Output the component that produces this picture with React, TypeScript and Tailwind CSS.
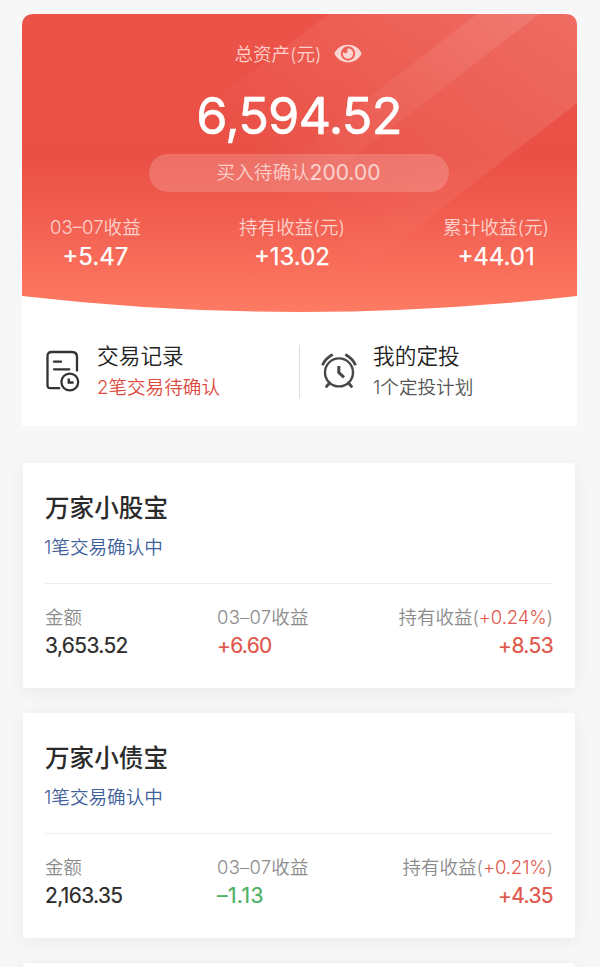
import React from 'react';

interface Fund {
  name: string;
  pending: string;
  amount: string;
  daily: string;
  rate: string;
  holding: string;
}

interface StatProps {
  label: string;
  value: string;
}

const funds: Fund[] = [
  { name: '万家小股宝', pending: '1笔交易确认中', amount: '3,653.52', daily: '+6.60', rate: '+0.24%', holding: '+8.53' },
  { name: '万家小债宝', pending: '1笔交易确认中', amount: '2,163.35', daily: '–1.13', rate: '+0.21%', holding: '+4.35' },
];

const EyeIcon: React.FC = () => (
  <svg width="28" height="19" viewBox="0 0 28 19" className="block">
    <path d="M0.3 9.5C3 4 8 0.7 14 0.7S25 4 27.7 9.5C25 15 20 18.3 14 18.3S3 15 0.3 9.5Z" fill="#fbd5d1" />
    <circle cx="14" cy="9.5" r="7.2" fill="#ec6157" />
    <path d="M14 4.3A5.2 5.2 0 1 1 8.8 9.5Q8.8 8.8 9 8.1Q10.2 9.6 12 9.1Q14.4 8.2 13.2 5.4Z" fill="#fbd5d1" />
  </svg>
);

const RecordIcon: React.FC = () => (
  <svg width="34" height="42" viewBox="0 0 34 42" fill="none" stroke="#333" strokeWidth="2.3" strokeLinecap="round" className="block">
    <path d="M13.2 38.2H4.2Q1.5 38.2 1.5 35.5V6Q1.5 2 5.5 2H26Q31 2 31 7V20.5" />
    <path d="M8 11.7H15M8 19.3H23.3" />
    <circle cx="23.8" cy="32" r="8.4" />
    <path d="M22.8 28.5V32.6H27.6" strokeWidth="2.5" strokeLinecap="butt" />
  </svg>
);

const AlarmIcon: React.FC = () => (
  <svg width="36" height="36" viewBox="0 0 36 36" fill="none" stroke="#484848" strokeWidth="2.4" strokeLinecap="round" className="block">
    <circle cx="18" cy="19.4" r="14" />
    <path d="M8.6 29.8L5.5 33.5M27.4 29.8L30.5 33.5" strokeWidth="2.8" />
    <path d="M1.5 12.2Q4.4 5.2 11.7 1.5M34.5 12.2Q31.6 5.2 24.3 1.5" strokeWidth="2.9" strokeLinecap="butt" />
    <path d="M17.8 13V19.5L23 24.3" strokeWidth="3" strokeLinecap="butt" />
  </svg>
);

const HeaderBackground: React.FC = () => (
  <svg width="555" height="299" viewBox="0 0 555 299" className="absolute left-0 top-0">
    <defs>
      <linearGradient id="base" x1="0" y1="0" x2="0" y2="1">
        <stop offset="0" stopColor="#ec5348" />
        <stop offset="0.48" stopColor="#ea5045" />
        <stop offset="0.64" stopColor="#f05b4e" />
        <stop offset="1" stopColor="#ff7b63" />
      </linearGradient>
      <linearGradient id="wide" gradientUnits="userSpaceOnUse" x1="540" y1="0" x2="310" y2="230">
        <stop offset="0" stopColor="#fff" stopOpacity="0.14" />
        <stop offset="1" stopColor="#fff" stopOpacity="0" />
      </linearGradient>
      <linearGradient id="narrow" gradientUnits="userSpaceOnUse" x1="500" y1="0" x2="260" y2="200">
        <stop offset="0" stopColor="#fff" stopOpacity="0.1" />
        <stop offset="1" stopColor="#fff" stopOpacity="0" />
      </linearGradient>
      <clipPath id="shape">
        <path d="M0 12Q0 0 12 0H543Q555 0 555 12V282Q277.5 314 0 282Z" />
      </clipPath>
    </defs>
    <g clipPath="url(#shape)">
      <rect width="555" height="299" fill="url(#base)" />
      <path d="M307 0H555V89L285 299H-90Z" fill="url(#wide)" />
      <path d="M455 0H517L131 299H69Z" fill="url(#narrow)" />
    </g>
  </svg>
);

const HeaderStat: React.FC<StatProps> = ({ label, value }) => (
  <div className="text-center">
    <div className="text-[18.6px] leading-[28px] font-[350] text-[#fcd2cd]">{label}</div>
    <div className="text-[24px] leading-[32px] text-white [-webkit-text-stroke:0.25px]">{value}</div>
  </div>
);

const FundCard: React.FC<{ fund: Fund }> = ({ fund }) => (
  <div className="h-[225px] rounded-[3px] bg-white px-[22px] pt-[29px] shadow-[0_3px_18px_rgba(0,0,0,0.06)]">
    <h2 className="text-[24.6px] leading-[32px] font-medium text-[#2b2b2b]">{fund.name}</h2>
    <p className="-ml-px mt-[9px] text-[18.6px] leading-[28px] font-[350] text-[#3f5f9b]">{fund.pending}</p>
    <div className="mt-[22px] border-t border-[#eeeeee]" />
    <div className="mt-[19px] flex text-[18.5px] leading-[28px] font-[350] text-[#8b8b8b]">
      <div className="w-[172px]">
        <div>金额</div>
        <div className="mt-px text-[21px] font-normal text-[#2b2b2b] tracking-[-0.6px] [-webkit-text-stroke:0.2px]">{fund.amount}</div>
      </div>
      <div>
        <div className="tracking-[0.2px]">03–07收益</div>
        <div
          className={`mt-px text-[21px] font-normal [-webkit-text-stroke:0.2px] ${
            fund.daily.startsWith('+') ? 'tracking-[-0.7px] text-[#e0564b]' : 'tracking-[0.4px] text-[#4bb061]'
          }`}
        >
          {fund.daily}
        </div>
      </div>
      <div className="ml-auto text-right">
        <div>
          持有收益(<span className="font-[350] text-[#e0564b] tracking-[-0.1px]">{fund.rate}</span>)
        </div>
        <div className="mt-px text-[21px] font-normal text-[#e0564b] tracking-[-0.6px] [-webkit-text-stroke:0.2px]">{fund.holding}</div>
      </div>
    </div>
  </div>
);

const App: React.FC = () => {
  return (
    <div className="h-[967px] w-[600px] overflow-hidden bg-[#f7f7f7] pt-[13.5px] font-['Inter','Noto_Sans_CJK_SC',sans-serif]">
      <div className="relative ml-[22px] h-[412.5px] w-[555px] rounded-t-[13px] bg-white">
        <HeaderBackground />
        <div className="relative h-[298px] pt-[26px]">
          <div className="-ml-[2px] flex items-center justify-center gap-[13px]">
            <span className="text-[18.5px] leading-[28px] font-[350] text-[#fcd2cd]">总资产(元)</span>
            <EyeIcon />
          </div>
          <div className="mt-[16px] -ml-px text-center text-[50.5px] leading-[64px] text-white tracking-[-0.8px] [-webkit-text-stroke:0.6px]">6,594.52</div>
          <div className="mx-auto mt-[6px] flex h-[38px] w-[300px] -translate-x-px items-center justify-center rounded-full bg-white/18 text-[#fbd0cb]">
            <span className="text-[18.6px] font-[350]">买入待确认</span>
            <span className="text-[21px] [-webkit-text-stroke:0.15px]">200.00</span>
          </div>
          <div className="mt-[21px] flex justify-between px-[28px]">
            <HeaderStat label="03–07收益" value="+5.47" />
            <HeaderStat label="持有收益(元)" value="+13.02" />
            <HeaderStat label="累计收益(元)" value="+44.01" />
          </div>
        </div>
        <div className="flex pt-[30px]">
          <div className="flex w-[277px] pl-[24px]">
            <div className="pt-[8px]">
              <RecordIcon />
            </div>
            <div className="ml-[17px]">
              <div className="text-[21.7px] leading-[28px] font-[350] text-[#222]">交易记录</div>
              <div className="mt-[3px] text-[18.6px] leading-[28px] font-[350] text-[#dc4a40]">2笔交易待确认</div>
            </div>
          </div>
          <div className="mt-[3px] h-[53px] w-px bg-[#dedede]" />
          <div className="flex pl-[21px]">
            <div className="pt-[11px]">
              <AlarmIcon />
            </div>
            <div className="ml-[16px]">
              <div className="text-[21.7px] leading-[28px] font-[350] text-[#222]">我的定投</div>
              <div className="mt-[3px] text-[18.6px] leading-[28px] font-[350] text-[#555]">1个定投计划</div>
            </div>
          </div>
        </div>
      </div>
      <div className="ml-[23px] mt-[37px] flex w-[552px] flex-col gap-[25px]">
        {funds.map((fund) => (
          <FundCard key={fund.name} fund={fund} />
        ))}
        <div className="h-[225px] rounded-[3px] bg-white shadow-[0_3px_18px_rgba(0,0,0,0.06)]" />
      </div>
    </div>
  );
};

export default App;
